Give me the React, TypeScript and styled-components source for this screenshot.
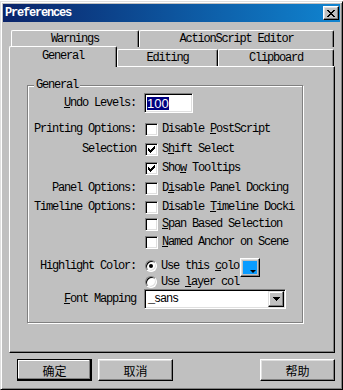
import React from 'react';
import styled, { createGlobalStyle, css } from 'styled-components';

const GlobalStyle = createGlobalStyle`
  html, body {
    margin: 0;
    padding: 0;
    background: #ffffff;
  }
  body {
    font-family: "Liberation Mono", "Noto Sans CJK SC", monospace;
    font-size: 12px;
    color: #000;
  }
`;

const mono = css`
  font-family: "Liberation Mono", "Noto Sans CJK SC", monospace;
  font-size: 12px;
  letter-spacing: -1.2px;
  color: #000;
`;

const raised = css`
  border: 1px solid;
  border-color: #ffffff #000000 #000000 #ffffff;
  box-shadow: inset -1px -1px #808080, inset 1px 1px #dfdfdf;
`;

const sunken = css`
  border: 1px solid;
  border-color: #808080 #ffffff #ffffff #808080;
  box-shadow: inset 1px 1px #000000, inset -1px -1px #dfdfdf;
`;

const Window = styled.div`
  box-sizing: border-box;
  width: 343px;
  height: 389px;
  margin-top: 1px;
  background: #c0c0c0;
  border: 1px solid;
  border-color: #dfdfdf #000000 #000000 #dfdfdf;
  box-shadow: inset 1px 1px #ffffff, inset -1px -1px #808080;
  padding: 2px;
  display: flex;
  flex-direction: column;
`;

const TitleBar = styled.div`
  height: 18px;
  flex: none;
  display: flex;
  align-items: center;
  justify-content: space-between;
  padding-left: 2px;
  background: linear-gradient(to right, #0a246a, #1084d0);
`;

const Title = styled.span`
  ${mono};
  color: #ffffff;
  font-weight: bold;
`;

const CloseButton = styled.div`
  box-sizing: border-box;
  width: 16px;
  height: 14px;
  margin-right: 1px;
  background: #c0c0c0;
  ${raised};
  display: flex;
  align-items: center;
  justify-content: center;
`;

const Body = styled.div`
  flex: 1;
  display: flex;
  flex-direction: column;
  padding: 8px 5px 0 6px;
`;

const TabRow = styled.div<{ $back?: boolean }>`
  display: flex;
  align-items: flex-end;
  height: ${p => (p.$back ? 17 : 19)}px;
  padding-left: ${p => (p.$back ? 2 : 0)}px;
`;

const Tab = styled.div<{ $w: number; $active?: boolean }>`
  ${mono};
  box-sizing: border-box;
  width: ${p => p.$w}px;
  height: ${p => (p.$active ? 21 : 17)}px;
  margin-bottom: ${p => (p.$active ? -1 : 0)}px;
  padding-bottom: ${p => (p.$active ? 3 : 0)}px;
  position: relative;
  z-index: ${p => (p.$active ? 2 : 1)};
  background: #c0c0c0;
  border-top: 1px solid #ffffff;
  border-left: 1px solid #ffffff;
  border-right: 1px solid #000000;
  border-radius: 2px 2px 0 0;
  box-shadow: inset -1px 0 #808080;
  display: flex;
  align-items: center;
  justify-content: center;
  white-space: nowrap;
`;

const Panel = styled.div`
  box-sizing: border-box;
  width: 326px;
  height: 287px;
  flex: none;
  border: 1px solid;
  border-color: #ffffff #000000 #000000 #ffffff;
  box-shadow: inset -1px -1px #808080;
  padding: 18px 0 0 17px;
`;

const GroupBox = styled.div`
  position: relative;
  box-sizing: border-box;
  width: 276px;
  height: 238px;
  border: 1px solid #808080;
  box-shadow: inset 1px 1px #ffffff, 1px 1px #ffffff;
  padding-top: 6px;
`;

const Legend = styled.span`
  ${mono};
  position: absolute;
  top: -8px;
  left: 6px;
  padding: 0 2px;
  line-height: 14px;
  background: #c0c0c0;
`;

const Row = styled.div<{ $h: number; $mt?: number }>`
  display: grid;
  grid-template-columns: 109px 1fr;
  column-gap: 7px;
  align-items: center;
  height: ${p => p.$h}px;
  margin-top: ${p => p.$mt ?? 0}px;
`;

const Label = styled.span`
  ${mono};
  text-align: right;
  white-space: nowrap;
  padding-right: 1px;
`;

const Cell = styled.div<{ $top?: boolean }>`
  display: flex;
  align-items: ${p => (p.$top ? 'flex-start' : 'center')};
  height: 100%;
`;

const TextField = styled.div`
  box-sizing: border-box;
  width: 49px;
  height: 20px;
  background: #ffffff;
  ${sunken};
  padding: 3px 0 0 2px;
`;

const Selected = styled.span`
  font-family: "Liberation Sans", Arial, sans-serif;
  font-size: 13px;
  line-height: 13px;
  background: #000080;
  color: #ffffff;
  display: inline-block;
`;

const CheckLabel = styled.label<{ $w: number }>`
  ${mono};
  display: flex;
  align-items: center;
  gap: 4px;
  width: ${p => p.$w}px;
  padding-left: 1px;
  white-space: nowrap;
  box-sizing: border-box;
`;

const Box = styled.span`
  box-sizing: border-box;
  flex: none;
  width: 13px;
  height: 13px;
  background: #ffffff;
  ${sunken};
  display: flex;
  align-items: center;
  justify-content: center;
`;

const RadioCircle = styled.span`
  box-sizing: border-box;
  flex: none;
  width: 12px;
  height: 12px;
  border-radius: 50%;
  background: #ffffff;
  border: 1px solid;
  border-color: #808080 #ffffff #ffffff #808080;
  box-shadow: inset 1px 1px #000000, inset -1px -1px #dfdfdf;
  display: flex;
  align-items: center;
  justify-content: center;
`;

const Dot = styled.span`
  width: 4px;
  height: 4px;
  border-radius: 50%;
  background: #000000;
`;

const Swatch = styled.div`
  box-sizing: border-box;
  flex: none;
  width: 20px;
  height: 19px;
  margin-top: 4px;
  background: #c0c0c0;
  ${raised};
  padding: 2px;
`;

const SwatchFill = styled.div`
  position: relative;
  width: 100%;
  height: 100%;
  background: #0a9cff;
`;

const SwatchArrow = styled.span`
  position: absolute;
  right: 1px;
  bottom: 1px;
  width: 0;
  height: 0;
  border-left: 3px solid transparent;
  border-right: 3px solid transparent;
  border-top: 3px solid #000000;
`;

const SelectBox = styled.div`
  box-sizing: border-box;
  width: 142px;
  height: 20px;
  background: #ffffff;
  ${sunken};
  display: flex;
  align-items: center;
  justify-content: space-between;
  padding: 1px 1px 1px 3px;
  ${mono};
`;

const DropButton = styled.div`
  box-sizing: border-box;
  width: 16px;
  height: 16px;
  background: #c0c0c0;
  border: 1px solid;
  border-color: #dfdfdf #000000 #000000 #dfdfdf;
  box-shadow: inset -1px -1px #808080, inset 1px 1px #ffffff;
  display: flex;
  align-items: center;
  justify-content: center;
`;

const Footer = styled.div`
  display: flex;
  gap: 6px;
  padding: 6px 0 0 8px;
`;

const Button = styled.div<{ $default?: boolean; $push?: boolean }>`
  box-sizing: border-box;
  width: 75px;
  height: 22px;
  margin-left: ${p => (p.$push ? 'auto' : '0')};
  background: #c0c0c0;
  font-family: "Noto Sans CJK SC", "Liberation Sans", sans-serif;
  font-size: 12px;
  display: flex;
  align-items: center;
  justify-content: center;
  border: 1px solid;
  border-color: ${p => (p.$default ? '#000000' : '#ffffff #000000 #000000 #ffffff')};
  box-shadow: ${p =>
    p.$default
      ? 'inset -1px -1px #000000, inset -2px -2px #808080, inset 1px 1px #ffffff'
      : 'inset -1px -1px #808080, inset 1px 1px #dfdfdf'};
`;

const U = styled.span`
  text-decoration: underline;
  text-underline-offset: 1px;
`;

function CheckMark() {
  const px: [number, number][] = [
    [6, 0], [5, 1], [6, 1], [0, 2], [4, 2], [5, 2], [6, 2],
    [0, 3], [1, 3], [3, 3], [4, 3], [5, 3], [0, 4], [1, 4], [2, 4], [3, 4], [4, 4],
    [1, 5], [2, 5], [3, 5], [2, 6],
  ];
  return (
    <svg width="7" height="7" viewBox="0 0 7 7" shapeRendering="crispEdges">
      {px.map(([x, y]) => (
        <rect key={`${x}-${y}`} x={x} y={y} width="1" height="1" fill="#000" />
      ))}
    </svg>
  );
}

function Check({ checked, w = 149, children }: { checked?: boolean; w?: number; children: React.ReactNode }) {
  return (
    <CheckLabel $w={w}>
      <Box>{checked && <CheckMark />}</Box>
      <span>{children}</span>
    </CheckLabel>
  );
}

function Radio({ on, children }: { on?: boolean; children: React.ReactNode }) {
  return (
    <CheckLabel $w={96}>
      <RadioCircle>{on && <Dot />}</RadioCircle>
      <span>{children}</span>
    </CheckLabel>
  );
}

export default function App() {
  return (
    <>
      <GlobalStyle />
      <Window>
        <TitleBar>
          <Title>Preferences</Title>
          <CloseButton>
            <svg width="8" height="7" viewBox="0 0 8 7" shapeRendering="crispEdges">
              <path d="M0 0h2v1h-2zM6 0h2v1h-2zM1 1h2v1h-2zM5 1h2v1h-2zM2 2h4v1h-4zM3 3h2v1h-2zM2 4h4v1h-4zM1 5h2v1h-2zM5 5h2v1h-2zM0 6h2v1h-2zM6 6h2v1h-2z" fill="#000" />
            </svg>
          </CloseButton>
        </TitleBar>
        <Body>
          <TabRow $back>
            <Tab $w={128}>Warnings</Tab>
            <Tab $w={195}>ActionScript Editor</Tab>
          </TabRow>
          <TabRow>
            <Tab $w={108} $active>General</Tab>
            <Tab $w={101}>Editing</Tab>
            <Tab $w={116}>Clipboard</Tab>
          </TabRow>
          <Panel>
            <GroupBox>
              <Legend>General</Legend>
              <Row $h={22}>
                <Label><U>U</U>ndo Levels:</Label>
                <Cell>
                  <TextField><Selected>100</Selected></TextField>
                </Cell>
              </Row>
              <Row $h={20} $mt={5}>
                <Label>Printing Options:</Label>
                <Check>Disable <U>P</U>ostScript</Check>
              </Row>
              <Row $h={20}>
                <Label>Selection</Label>
                <Check checked>S<U>h</U>ift Select</Check>
              </Row>
              <Row $h={18}>
                <Label />
                <Check checked>Sho<U>w</U> Tooltips</Check>
              </Row>
              <Row $h={22}>
                <Label>Panel Options:</Label>
                <Check>D<U>i</U>sable Panel Docking</Check>
              </Row>
              <Row $h={16}>
                <Label>Timeline Options:</Label>
                <Check>Disable <U>T</U>imeline Docki</Check>
              </Row>
              <Row $h={18}>
                <Label />
                <Check><U>S</U>pan Based Selection</Check>
              </Row>
              <Row $h={18}>
                <Label />
                <Check><U>N</U>amed Anchor on Scene</Check>
              </Row>
              <Row $h={20} $mt={3}>
                <Label>Highlight Color:</Label>
                <Cell $top>
                  <Cell>
                    <Radio on>Use this <U>c</U>olo</Radio>
                  </Cell>
                  <Swatch>
                    <SwatchFill>
                      <SwatchArrow />
                    </SwatchFill>
                  </Swatch>
                </Cell>
              </Row>
              <Row $h={16}>
                <Label />
                <Radio>Use <U>l</U>ayer col</Radio>
              </Row>
              <Row $h={20} $mt={-1}>
                <Label><U>F</U>ont Mapping</Label>
                <Cell>
                  <SelectBox>
                    <span>_sans</span>
                    <DropButton>
                      <svg width="7" height="4" viewBox="0 0 7 4" shapeRendering="crispEdges">
                        <path d="M0 0h7v1h-1v1h-1v1h-1v1h-1v-1h-1v-1h-1v-1h-1z" fill="#000" />
                      </svg>
                    </DropButton>
                  </SelectBox>
                </Cell>
              </Row>
            </GroupBox>
          </Panel>
          <Footer>
            <Button $default>确定</Button>
            <Button>取消</Button>
            <Button $push>帮助</Button>
          </Footer>
        </Body>
      </Window>
    </>
  );
}
